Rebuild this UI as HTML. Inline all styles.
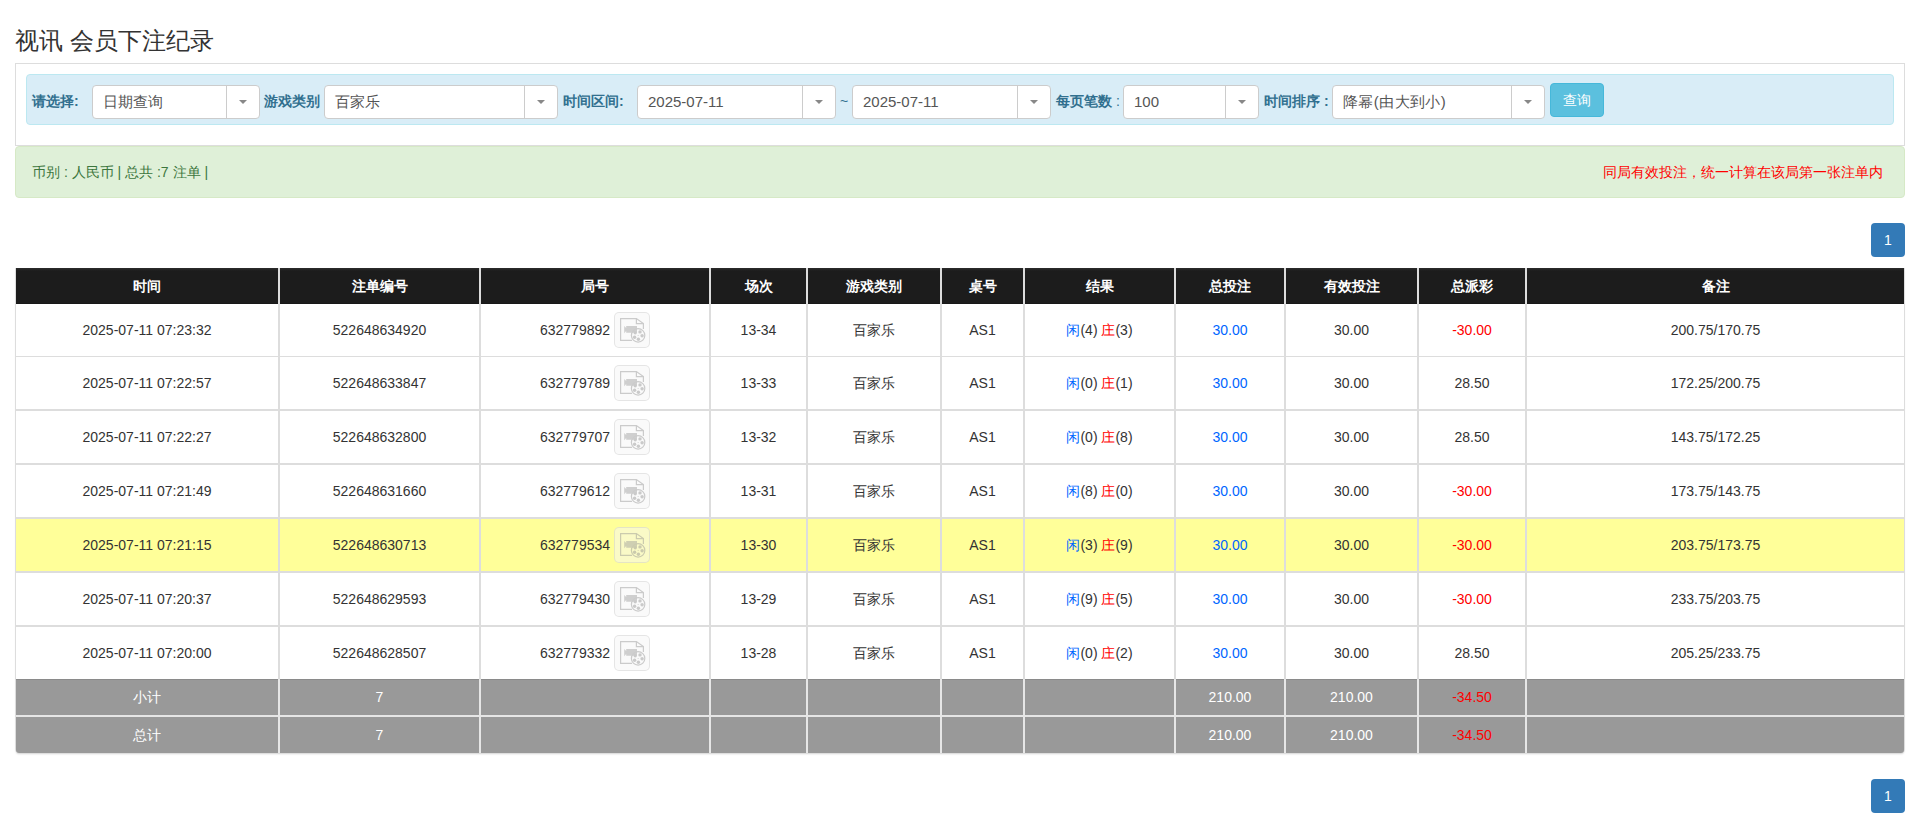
<!DOCTYPE html><html><head><meta charset="utf-8"><title>视讯 会员下注纪录</title><style>
*{box-sizing:border-box;margin:0;padding:0}
html,body{width:1919px;height:822px;overflow:hidden;background:#fff}
body{position:relative;font-family:"Liberation Sans",sans-serif;color:#333;font-size:14px}
.a{position:absolute}
.title{left:15px;top:26px;font-size:24px;line-height:30px;color:#333;white-space:nowrap}
.well{left:15px;top:63px;width:1890px;height:83px;border:1px solid #ddd;}
.info{left:26px;top:74px;width:1868px;height:51px;background:#d9edf7;border:1px solid #bce8f1;border-radius:4px}
.lbl{font-weight:bold;color:#31708f;font-size:14px;line-height:20px;top:91px;white-space:nowrap}
.sel{top:85px;height:34px;background:#fff;border:1px solid #ccc;border-radius:4px}
.sel .tx{position:absolute;left:10px;top:0;line-height:32px;font-size:15px;color:#555;white-space:nowrap}
.sel .dv{position:absolute;top:0;bottom:0;width:1px;background:#ccc}
.sel .ar{position:absolute;top:14px;width:0;height:0;border-left:4px solid transparent;border-right:4px solid transparent;border-top:4px solid #888}
.btn{left:1550px;top:83px;width:54px;height:34px;background:#5bc0de;border:1px solid #46b8da;border-radius:4px;color:#fff;font-size:14px;line-height:32px;text-align:center}
.ok{left:15px;top:146px;width:1890px;height:52px;background:#dff0d8;border:1px solid #d6e9c6;border-radius:4px}
.okt{left:32px;top:162px;line-height:20px;font-size:14px;color:#3c763d;white-space:nowrap}
.red{right:36px;top:162px;line-height:20px;font-size:14px;color:#f00;white-space:nowrap}
.pg{left:1871px;width:34px;height:34px;background:#337ab7;border-radius:4px;color:#fff;font-size:14px;line-height:34px;text-align:center}
.tbl{left:15px;top:268px;width:1890px;height:485px;border:1px solid #ddd;border-top:0;border-radius:0 0 4px 4px;box-shadow:0 2px 2px -1px rgba(0,0,0,.18);overflow:hidden}
.c{position:absolute;display:flex;align-items:center;justify-content:center;white-space:nowrap;font-size:14px}
.h{background:linear-gradient(#2c2c2c,#1c1c1c 3px,#1c1c1c 35px,#141414 36px);color:#fff;font-weight:bold;padding-top:2px}
.w{background:#fff;color:#333}
.y{background:#ffff99;color:#333}
.g{background:#999;color:#fff}
.bl{color:#0066ff}
.cj{position:relative;top:1px}
.rd{color:#f00}
.ic{display:inline-block;width:36px;height:36px;margin-left:4px;border:1px solid rgba(190,190,190,.35);border-radius:5px;background:rgba(246,246,246,.5);position:relative}
</style></head><body>
<div class="a title">视讯 会员下注纪录</div>
<div class="a well"></div>
<div class="a info"></div>
<div class="a lbl" style="left:32px">请选择:</div>
<div class="a lbl" style="left:264px">游戏类别</div>
<div class="a lbl" style="left:563px">时间区间:</div>
<div class="a lbl" style="left:1056px">每页笔数<span style="font-weight:normal"> :</span></div>
<div class="a lbl" style="left:1264px">时间排序 :</div>
<div class="a" style="left:840px;top:91px;line-height:20px;font-size:14px;color:#31708f">~</div>
<div class="a sel" style="left:92px;width:168px"><div class="tx" style="">日期查询</div><div class="dv" style="left:133px"></div><div class="ar" style="left:145.5px"></div></div>
<div class="a sel" style="left:324px;width:234px"><div class="tx" style="">百家乐</div><div class="dv" style="left:199px"></div><div class="ar" style="left:211.5px"></div></div>
<div class="a sel" style="left:637px;width:199px"><div class="tx" style="">2025-07-11</div><div class="dv" style="left:164px"></div><div class="ar" style="left:176.5px"></div></div>
<div class="a sel" style="left:852px;width:199px"><div class="tx" style="">2025-07-11</div><div class="dv" style="left:164px"></div><div class="ar" style="left:176.5px"></div></div>
<div class="a sel" style="left:1123px;width:136px"><div class="tx" style="">100</div><div class="dv" style="left:101px"></div><div class="ar" style="left:113.5px"></div></div>
<div class="a sel" style="left:1332px;width:213px"><div class="tx" style=";letter-spacing:.4px">降幂(由大到小)</div><div class="dv" style="left:178px"></div><div class="ar" style="left:190.5px"></div></div>
<div class="a btn">查询</div>
<div class="a ok"></div>
<div class="a okt">币别 : 人民币 | 总共 :7 注单 |</div>
<div class="a red">同局有效投注，统一计算在该局第一张注单内</div>
<div class="a pg" style="top:223px">1</div>
<div class="a pg" style="top:779px">1</div>
<div class="a tbl"></div>
<div class="a" style="left:16px;top:304px;width:1888px;height:375px;background:#ddd"></div>
<div class="a" style="left:16px;top:679px;width:1888px;height:74px;background:#e6e6e6;border-radius:0 0 3px 3px"></div>
<div class="a" style="left:16px;top:268px;width:1888px;height:36px;background:#dcdcdc"></div>
<div class="c h" style="left:16px;top:268px;width:262px;height:36px;">时间</div>
<div class="c h" style="left:280px;top:268px;width:199px;height:36px;">注单编号</div>
<div class="c h" style="left:481px;top:268px;width:228px;height:36px;">局号</div>
<div class="c h" style="left:711px;top:268px;width:95px;height:36px;">场次</div>
<div class="c h" style="left:808px;top:268px;width:132px;height:36px;">游戏类别</div>
<div class="c h" style="left:942px;top:268px;width:81px;height:36px;">桌号</div>
<div class="c h" style="left:1025px;top:268px;width:149px;height:36px;">结果</div>
<div class="c h" style="left:1176px;top:268px;width:108px;height:36px;">总投注</div>
<div class="c h" style="left:1286px;top:268px;width:131px;height:36px;">有效投注</div>
<div class="c h" style="left:1419px;top:268px;width:106px;height:36px;">总派彩</div>
<div class="c h" style="left:1527px;top:268px;width:377px;height:36px;">备注</div>
<div class="c w" style="left:16px;top:304px;width:262px;height:52px;">2025-07-11 07:23:32</div>
<div class="c w" style="left:280px;top:304px;width:199px;height:52px;">522648634920</div>
<div class="c w" style="left:481px;top:304px;width:228px;height:52px;">632779892<span class="ic"><svg width="26" height="26" viewBox="0 0 26 26" style="position:absolute;left:5px;top:5px;opacity:.42"><path d="M12 22.4H0.6V0.6H16.4L23.4 5.6V11" fill="none" stroke="#8c8c8c" stroke-width="1.2"/><path d="M16.4 0.6V5.6H23.4" fill="none" stroke="#8c8c8c" stroke-width="1.2"/><path d="M4.2 8L6.2 10V8H17V14.7H6.2V13L4.2 15.2Z" fill="#969696"/><circle cx="18.1" cy="17.4" r="6.7" fill="none" stroke="#8c8c8c" stroke-width="1.2"/><circle cx="15.2" cy="14.8" r="1.7" fill="#8a8a8a"/><circle cx="20" cy="13.9" r="1.7" fill="#8a8a8a"/><circle cx="22.1" cy="17.7" r="1.7" fill="#8a8a8a"/><circle cx="18.4" cy="21.3" r="1.7" fill="#8a8a8a"/><circle cx="14.6" cy="19.3" r="1.7" fill="#8a8a8a"/><circle cx="18.1" cy="17.4" r=".5" fill="#8a8a8a"/></svg></span></div>
<div class="c w" style="left:711px;top:304px;width:95px;height:52px;">13-34</div>
<div class="c w" style="left:808px;top:304px;width:132px;height:52px;"><span class="cj">百家乐</span></div>
<div class="c w" style="left:942px;top:304px;width:81px;height:52px;">AS1</div>
<div class="c w" style="left:1025px;top:304px;width:149px;height:52px;"><span class="bl cj">闲</span>(4)&nbsp;<span class="rd cj">庄</span>(3)</div>
<div class="c w" style="left:1176px;top:304px;width:108px;height:52px;"><span class="bl">30.00</span></div>
<div class="c w" style="left:1286px;top:304px;width:131px;height:52px;">30.00</div>
<div class="c w" style="left:1419px;top:304px;width:106px;height:52px;"><span class="rd">-30.00</span></div>
<div class="c w" style="left:1527px;top:304px;width:377px;height:52px;">200.75/170.75</div>
<div class="c w" style="left:16px;top:357px;width:262px;height:52px;">2025-07-11 07:22:57</div>
<div class="c w" style="left:280px;top:357px;width:199px;height:52px;">522648633847</div>
<div class="c w" style="left:481px;top:357px;width:228px;height:52px;">632779789<span class="ic"><svg width="26" height="26" viewBox="0 0 26 26" style="position:absolute;left:5px;top:5px;opacity:.42"><path d="M12 22.4H0.6V0.6H16.4L23.4 5.6V11" fill="none" stroke="#8c8c8c" stroke-width="1.2"/><path d="M16.4 0.6V5.6H23.4" fill="none" stroke="#8c8c8c" stroke-width="1.2"/><path d="M4.2 8L6.2 10V8H17V14.7H6.2V13L4.2 15.2Z" fill="#969696"/><circle cx="18.1" cy="17.4" r="6.7" fill="none" stroke="#8c8c8c" stroke-width="1.2"/><circle cx="15.2" cy="14.8" r="1.7" fill="#8a8a8a"/><circle cx="20" cy="13.9" r="1.7" fill="#8a8a8a"/><circle cx="22.1" cy="17.7" r="1.7" fill="#8a8a8a"/><circle cx="18.4" cy="21.3" r="1.7" fill="#8a8a8a"/><circle cx="14.6" cy="19.3" r="1.7" fill="#8a8a8a"/><circle cx="18.1" cy="17.4" r=".5" fill="#8a8a8a"/></svg></span></div>
<div class="c w" style="left:711px;top:357px;width:95px;height:52px;">13-33</div>
<div class="c w" style="left:808px;top:357px;width:132px;height:52px;"><span class="cj">百家乐</span></div>
<div class="c w" style="left:942px;top:357px;width:81px;height:52px;">AS1</div>
<div class="c w" style="left:1025px;top:357px;width:149px;height:52px;"><span class="bl cj">闲</span>(0)&nbsp;<span class="rd cj">庄</span>(1)</div>
<div class="c w" style="left:1176px;top:357px;width:108px;height:52px;"><span class="bl">30.00</span></div>
<div class="c w" style="left:1286px;top:357px;width:131px;height:52px;">30.00</div>
<div class="c w" style="left:1419px;top:357px;width:106px;height:52px;">28.50</div>
<div class="c w" style="left:1527px;top:357px;width:377px;height:52px;">172.25/200.75</div>
<div class="c w" style="left:16px;top:411px;width:262px;height:52px;">2025-07-11 07:22:27</div>
<div class="c w" style="left:280px;top:411px;width:199px;height:52px;">522648632800</div>
<div class="c w" style="left:481px;top:411px;width:228px;height:52px;">632779707<span class="ic"><svg width="26" height="26" viewBox="0 0 26 26" style="position:absolute;left:5px;top:5px;opacity:.42"><path d="M12 22.4H0.6V0.6H16.4L23.4 5.6V11" fill="none" stroke="#8c8c8c" stroke-width="1.2"/><path d="M16.4 0.6V5.6H23.4" fill="none" stroke="#8c8c8c" stroke-width="1.2"/><path d="M4.2 8L6.2 10V8H17V14.7H6.2V13L4.2 15.2Z" fill="#969696"/><circle cx="18.1" cy="17.4" r="6.7" fill="none" stroke="#8c8c8c" stroke-width="1.2"/><circle cx="15.2" cy="14.8" r="1.7" fill="#8a8a8a"/><circle cx="20" cy="13.9" r="1.7" fill="#8a8a8a"/><circle cx="22.1" cy="17.7" r="1.7" fill="#8a8a8a"/><circle cx="18.4" cy="21.3" r="1.7" fill="#8a8a8a"/><circle cx="14.6" cy="19.3" r="1.7" fill="#8a8a8a"/><circle cx="18.1" cy="17.4" r=".5" fill="#8a8a8a"/></svg></span></div>
<div class="c w" style="left:711px;top:411px;width:95px;height:52px;">13-32</div>
<div class="c w" style="left:808px;top:411px;width:132px;height:52px;"><span class="cj">百家乐</span></div>
<div class="c w" style="left:942px;top:411px;width:81px;height:52px;">AS1</div>
<div class="c w" style="left:1025px;top:411px;width:149px;height:52px;"><span class="bl cj">闲</span>(0)&nbsp;<span class="rd cj">庄</span>(8)</div>
<div class="c w" style="left:1176px;top:411px;width:108px;height:52px;"><span class="bl">30.00</span></div>
<div class="c w" style="left:1286px;top:411px;width:131px;height:52px;">30.00</div>
<div class="c w" style="left:1419px;top:411px;width:106px;height:52px;">28.50</div>
<div class="c w" style="left:1527px;top:411px;width:377px;height:52px;">143.75/172.25</div>
<div class="c w" style="left:16px;top:465px;width:262px;height:52px;">2025-07-11 07:21:49</div>
<div class="c w" style="left:280px;top:465px;width:199px;height:52px;">522648631660</div>
<div class="c w" style="left:481px;top:465px;width:228px;height:52px;">632779612<span class="ic"><svg width="26" height="26" viewBox="0 0 26 26" style="position:absolute;left:5px;top:5px;opacity:.42"><path d="M12 22.4H0.6V0.6H16.4L23.4 5.6V11" fill="none" stroke="#8c8c8c" stroke-width="1.2"/><path d="M16.4 0.6V5.6H23.4" fill="none" stroke="#8c8c8c" stroke-width="1.2"/><path d="M4.2 8L6.2 10V8H17V14.7H6.2V13L4.2 15.2Z" fill="#969696"/><circle cx="18.1" cy="17.4" r="6.7" fill="none" stroke="#8c8c8c" stroke-width="1.2"/><circle cx="15.2" cy="14.8" r="1.7" fill="#8a8a8a"/><circle cx="20" cy="13.9" r="1.7" fill="#8a8a8a"/><circle cx="22.1" cy="17.7" r="1.7" fill="#8a8a8a"/><circle cx="18.4" cy="21.3" r="1.7" fill="#8a8a8a"/><circle cx="14.6" cy="19.3" r="1.7" fill="#8a8a8a"/><circle cx="18.1" cy="17.4" r=".5" fill="#8a8a8a"/></svg></span></div>
<div class="c w" style="left:711px;top:465px;width:95px;height:52px;">13-31</div>
<div class="c w" style="left:808px;top:465px;width:132px;height:52px;"><span class="cj">百家乐</span></div>
<div class="c w" style="left:942px;top:465px;width:81px;height:52px;">AS1</div>
<div class="c w" style="left:1025px;top:465px;width:149px;height:52px;"><span class="bl cj">闲</span>(8)&nbsp;<span class="rd cj">庄</span>(0)</div>
<div class="c w" style="left:1176px;top:465px;width:108px;height:52px;"><span class="bl">30.00</span></div>
<div class="c w" style="left:1286px;top:465px;width:131px;height:52px;">30.00</div>
<div class="c w" style="left:1419px;top:465px;width:106px;height:52px;"><span class="rd">-30.00</span></div>
<div class="c w" style="left:1527px;top:465px;width:377px;height:52px;">173.75/143.75</div>
<div class="c y" style="left:16px;top:519px;width:262px;height:52px;">2025-07-11 07:21:15</div>
<div class="c y" style="left:280px;top:519px;width:199px;height:52px;">522648630713</div>
<div class="c y" style="left:481px;top:519px;width:228px;height:52px;">632779534<span class="ic"><svg width="26" height="26" viewBox="0 0 26 26" style="position:absolute;left:5px;top:5px;opacity:.42"><path d="M12 22.4H0.6V0.6H16.4L23.4 5.6V11" fill="none" stroke="#8c8c8c" stroke-width="1.2"/><path d="M16.4 0.6V5.6H23.4" fill="none" stroke="#8c8c8c" stroke-width="1.2"/><path d="M4.2 8L6.2 10V8H17V14.7H6.2V13L4.2 15.2Z" fill="#969696"/><circle cx="18.1" cy="17.4" r="6.7" fill="none" stroke="#8c8c8c" stroke-width="1.2"/><circle cx="15.2" cy="14.8" r="1.7" fill="#8a8a8a"/><circle cx="20" cy="13.9" r="1.7" fill="#8a8a8a"/><circle cx="22.1" cy="17.7" r="1.7" fill="#8a8a8a"/><circle cx="18.4" cy="21.3" r="1.7" fill="#8a8a8a"/><circle cx="14.6" cy="19.3" r="1.7" fill="#8a8a8a"/><circle cx="18.1" cy="17.4" r=".5" fill="#8a8a8a"/></svg></span></div>
<div class="c y" style="left:711px;top:519px;width:95px;height:52px;">13-30</div>
<div class="c y" style="left:808px;top:519px;width:132px;height:52px;"><span class="cj">百家乐</span></div>
<div class="c y" style="left:942px;top:519px;width:81px;height:52px;">AS1</div>
<div class="c y" style="left:1025px;top:519px;width:149px;height:52px;"><span class="bl cj">闲</span>(3)&nbsp;<span class="rd cj">庄</span>(9)</div>
<div class="c y" style="left:1176px;top:519px;width:108px;height:52px;"><span class="bl">30.00</span></div>
<div class="c y" style="left:1286px;top:519px;width:131px;height:52px;">30.00</div>
<div class="c y" style="left:1419px;top:519px;width:106px;height:52px;"><span class="rd">-30.00</span></div>
<div class="c y" style="left:1527px;top:519px;width:377px;height:52px;">203.75/173.75</div>
<div class="c w" style="left:16px;top:573px;width:262px;height:52px;">2025-07-11 07:20:37</div>
<div class="c w" style="left:280px;top:573px;width:199px;height:52px;">522648629593</div>
<div class="c w" style="left:481px;top:573px;width:228px;height:52px;">632779430<span class="ic"><svg width="26" height="26" viewBox="0 0 26 26" style="position:absolute;left:5px;top:5px;opacity:.42"><path d="M12 22.4H0.6V0.6H16.4L23.4 5.6V11" fill="none" stroke="#8c8c8c" stroke-width="1.2"/><path d="M16.4 0.6V5.6H23.4" fill="none" stroke="#8c8c8c" stroke-width="1.2"/><path d="M4.2 8L6.2 10V8H17V14.7H6.2V13L4.2 15.2Z" fill="#969696"/><circle cx="18.1" cy="17.4" r="6.7" fill="none" stroke="#8c8c8c" stroke-width="1.2"/><circle cx="15.2" cy="14.8" r="1.7" fill="#8a8a8a"/><circle cx="20" cy="13.9" r="1.7" fill="#8a8a8a"/><circle cx="22.1" cy="17.7" r="1.7" fill="#8a8a8a"/><circle cx="18.4" cy="21.3" r="1.7" fill="#8a8a8a"/><circle cx="14.6" cy="19.3" r="1.7" fill="#8a8a8a"/><circle cx="18.1" cy="17.4" r=".5" fill="#8a8a8a"/></svg></span></div>
<div class="c w" style="left:711px;top:573px;width:95px;height:52px;">13-29</div>
<div class="c w" style="left:808px;top:573px;width:132px;height:52px;"><span class="cj">百家乐</span></div>
<div class="c w" style="left:942px;top:573px;width:81px;height:52px;">AS1</div>
<div class="c w" style="left:1025px;top:573px;width:149px;height:52px;"><span class="bl cj">闲</span>(9)&nbsp;<span class="rd cj">庄</span>(5)</div>
<div class="c w" style="left:1176px;top:573px;width:108px;height:52px;"><span class="bl">30.00</span></div>
<div class="c w" style="left:1286px;top:573px;width:131px;height:52px;">30.00</div>
<div class="c w" style="left:1419px;top:573px;width:106px;height:52px;"><span class="rd">-30.00</span></div>
<div class="c w" style="left:1527px;top:573px;width:377px;height:52px;">233.75/203.75</div>
<div class="c w" style="left:16px;top:627px;width:262px;height:52px;">2025-07-11 07:20:00</div>
<div class="c w" style="left:280px;top:627px;width:199px;height:52px;">522648628507</div>
<div class="c w" style="left:481px;top:627px;width:228px;height:52px;">632779332<span class="ic"><svg width="26" height="26" viewBox="0 0 26 26" style="position:absolute;left:5px;top:5px;opacity:.42"><path d="M12 22.4H0.6V0.6H16.4L23.4 5.6V11" fill="none" stroke="#8c8c8c" stroke-width="1.2"/><path d="M16.4 0.6V5.6H23.4" fill="none" stroke="#8c8c8c" stroke-width="1.2"/><path d="M4.2 8L6.2 10V8H17V14.7H6.2V13L4.2 15.2Z" fill="#969696"/><circle cx="18.1" cy="17.4" r="6.7" fill="none" stroke="#8c8c8c" stroke-width="1.2"/><circle cx="15.2" cy="14.8" r="1.7" fill="#8a8a8a"/><circle cx="20" cy="13.9" r="1.7" fill="#8a8a8a"/><circle cx="22.1" cy="17.7" r="1.7" fill="#8a8a8a"/><circle cx="18.4" cy="21.3" r="1.7" fill="#8a8a8a"/><circle cx="14.6" cy="19.3" r="1.7" fill="#8a8a8a"/><circle cx="18.1" cy="17.4" r=".5" fill="#8a8a8a"/></svg></span></div>
<div class="c w" style="left:711px;top:627px;width:95px;height:52px;">13-28</div>
<div class="c w" style="left:808px;top:627px;width:132px;height:52px;"><span class="cj">百家乐</span></div>
<div class="c w" style="left:942px;top:627px;width:81px;height:52px;">AS1</div>
<div class="c w" style="left:1025px;top:627px;width:149px;height:52px;"><span class="bl cj">闲</span>(0)&nbsp;<span class="rd cj">庄</span>(2)</div>
<div class="c w" style="left:1176px;top:627px;width:108px;height:52px;"><span class="bl">30.00</span></div>
<div class="c w" style="left:1286px;top:627px;width:131px;height:52px;">30.00</div>
<div class="c w" style="left:1419px;top:627px;width:106px;height:52px;">28.50</div>
<div class="c w" style="left:1527px;top:627px;width:377px;height:52px;">205.25/233.75</div>
<div class="c g" style="left:16px;top:679px;width:262px;height:36px;box-shadow:inset 0 1px 0 #8a8a8a;"><span class="cj">小计</span></div>
<div class="c g" style="left:280px;top:679px;width:199px;height:36px;box-shadow:inset 0 1px 0 #8a8a8a;">7</div>
<div class="c g" style="left:481px;top:679px;width:228px;height:36px;box-shadow:inset 0 1px 0 #8a8a8a;"></div>
<div class="c g" style="left:711px;top:679px;width:95px;height:36px;box-shadow:inset 0 1px 0 #8a8a8a;"></div>
<div class="c g" style="left:808px;top:679px;width:132px;height:36px;box-shadow:inset 0 1px 0 #8a8a8a;"></div>
<div class="c g" style="left:942px;top:679px;width:81px;height:36px;box-shadow:inset 0 1px 0 #8a8a8a;"></div>
<div class="c g" style="left:1025px;top:679px;width:149px;height:36px;box-shadow:inset 0 1px 0 #8a8a8a;"></div>
<div class="c g" style="left:1176px;top:679px;width:108px;height:36px;box-shadow:inset 0 1px 0 #8a8a8a;">210.00</div>
<div class="c g" style="left:1286px;top:679px;width:131px;height:36px;box-shadow:inset 0 1px 0 #8a8a8a;">210.00</div>
<div class="c g" style="left:1419px;top:679px;width:106px;height:36px;box-shadow:inset 0 1px 0 #8a8a8a;"><span class="rd">-34.50</span></div>
<div class="c g" style="left:1527px;top:679px;width:377px;height:36px;box-shadow:inset 0 1px 0 #8a8a8a;"></div>
<div class="c g" style="left:16px;top:717px;width:262px;height:36px;border-bottom-left-radius:3px;"><span class="cj">总计</span></div>
<div class="c g" style="left:280px;top:717px;width:199px;height:36px;">7</div>
<div class="c g" style="left:481px;top:717px;width:228px;height:36px;"></div>
<div class="c g" style="left:711px;top:717px;width:95px;height:36px;"></div>
<div class="c g" style="left:808px;top:717px;width:132px;height:36px;"></div>
<div class="c g" style="left:942px;top:717px;width:81px;height:36px;"></div>
<div class="c g" style="left:1025px;top:717px;width:149px;height:36px;"></div>
<div class="c g" style="left:1176px;top:717px;width:108px;height:36px;">210.00</div>
<div class="c g" style="left:1286px;top:717px;width:131px;height:36px;">210.00</div>
<div class="c g" style="left:1419px;top:717px;width:106px;height:36px;"><span class="rd">-34.50</span></div>
<div class="c g" style="left:1527px;top:717px;width:377px;height:36px;border-bottom-right-radius:3px;"></div>
</body></html>
